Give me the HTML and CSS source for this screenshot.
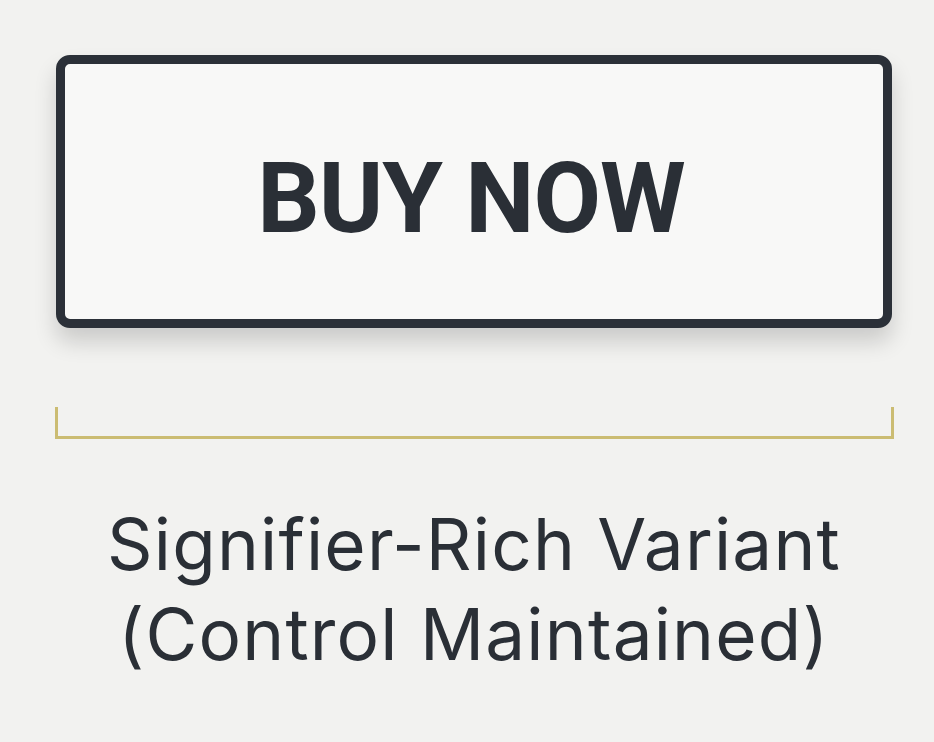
FILE: index.html
```html
<!DOCTYPE html>
<html lang="en">
<head>
    <meta charset="UTF-8">
    <meta name="viewport" content="width=device-width, initial-scale=1.0">
    <title>Signifier-Rich Variant</title>
    <link rel="stylesheet" href="styles.css">
</head>
<body>
    <div id="variant-panel">
        <button class="buy-button">BUY NOW</button>
        <div class="bracket"></div>
        <p class="caption">Signifier-Rich Variant<br>(Control Maintained)</p>
    </div>
</body>
</html>
```

FILE: styles.css
```css
body {
    margin: 0;
    background-color: #f2f2f0;
    font-family: Inter, "Liberation Sans", sans-serif;
    color: #2a2f36;
}
#variant-panel {
    padding: 55px 42px 0 56px;
    display: flex;
    flex-direction: column;
}
.buy-button {
    width: 836px;
    height: 273px;
    box-sizing: border-box;
    border: 9px solid #2b3038;
    border-radius: 14px;
    background-color: #f8f8f7;
    box-shadow: 0 14px 22px rgba(0, 0, 0, 0.16);
    font-family: Roboto, "Liberation Sans", sans-serif;
    font-weight: 700;
    font-size: 98px;
    letter-spacing: -1px;
    color: #2a2f36;
    padding: 14px 6px 0 0;
    cursor: pointer;
}
.bracket {
    margin: 79px 0 0 -1px;
    width: 839px;
    height: 32px;
    box-sizing: border-box;
    border: 3px solid #cbbc72;
    border-top: none;
}
.caption {
    margin: 60px 0 0 0;
    text-align: center;
    font-size: 71px;
    letter-spacing: 1.2px;
    line-height: 90px;
}
```
